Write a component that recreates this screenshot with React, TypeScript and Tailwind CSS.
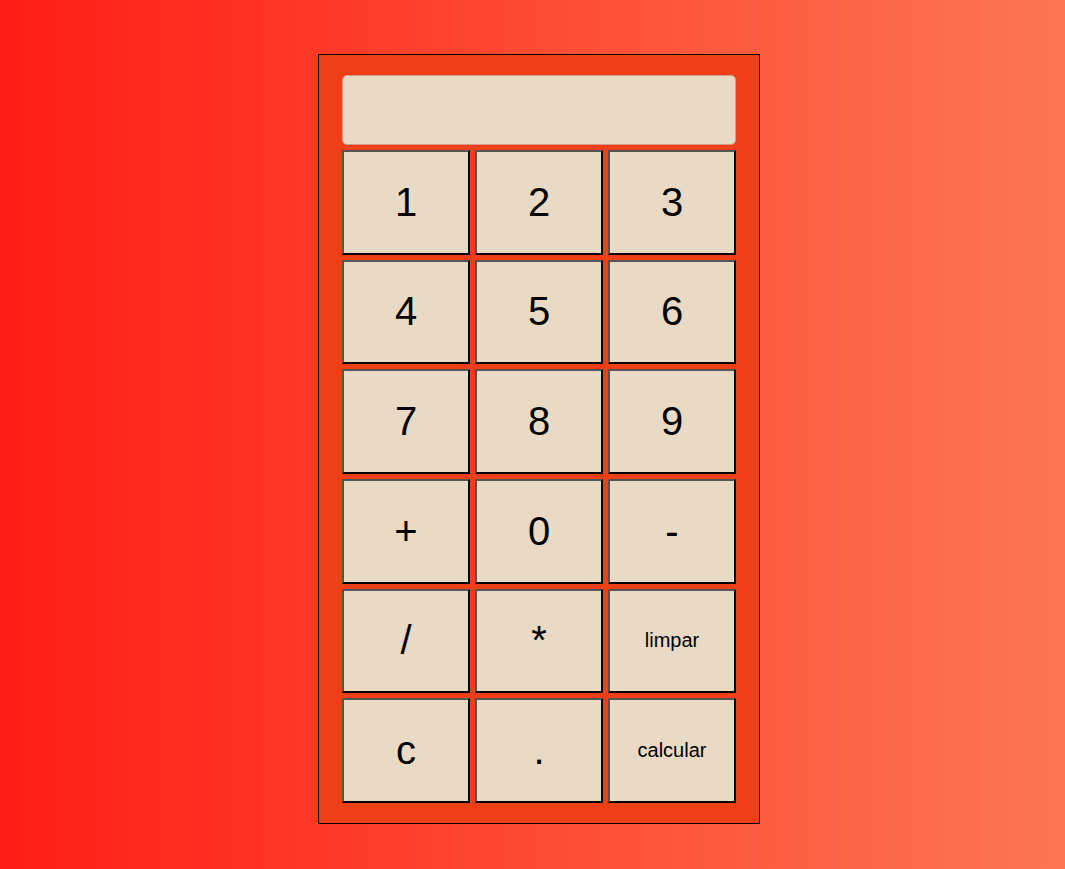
const keys = ['1', '2', '3', '4', '5', '6', '7', '8', '9', '+', '0', '-', '/', '*', 'limpar', 'c', '.', 'calcular'];

function Key({ label }: { label: string }) {
  const size = label.length > 1 ? 'text-[20px]' : 'text-[40px]';
  return (
    <button
      type="button"
      className={`${size} flex items-center justify-center border-2 border-t-[#555] border-l-[#555] border-r-black border-b-black bg-[#e8dac4] pb-px leading-none text-black`}
    >
      {label}
    </button>
  );
}

export default function App() {
  return (
    <main className="flex min-h-screen justify-center bg-[linear-gradient(to_right,#ff1d15,#fc7753)] pt-[54px] pb-[45px] pl-[13px] font-['Liberation_Sans',Arial,sans-serif]">
      <section className="flex w-full max-w-[442px] flex-col gap-[5px] border border-black bg-[#ee3f17] px-[23px] py-5">
        <input
          type="text"
          aria-label="Resultado"
          className="h-[70px] w-full rounded-[5px] border border-[#d69a92] bg-[#e8dac4] px-2 text-[40px] outline-none"
        />
        <div className="grid flex-1 auto-rows-fr grid-cols-3 gap-[5px]">
          {keys.map((key) => (
            <Key key={key} label={key} />
          ))}
        </div>
      </section>
    </main>
  );
}
